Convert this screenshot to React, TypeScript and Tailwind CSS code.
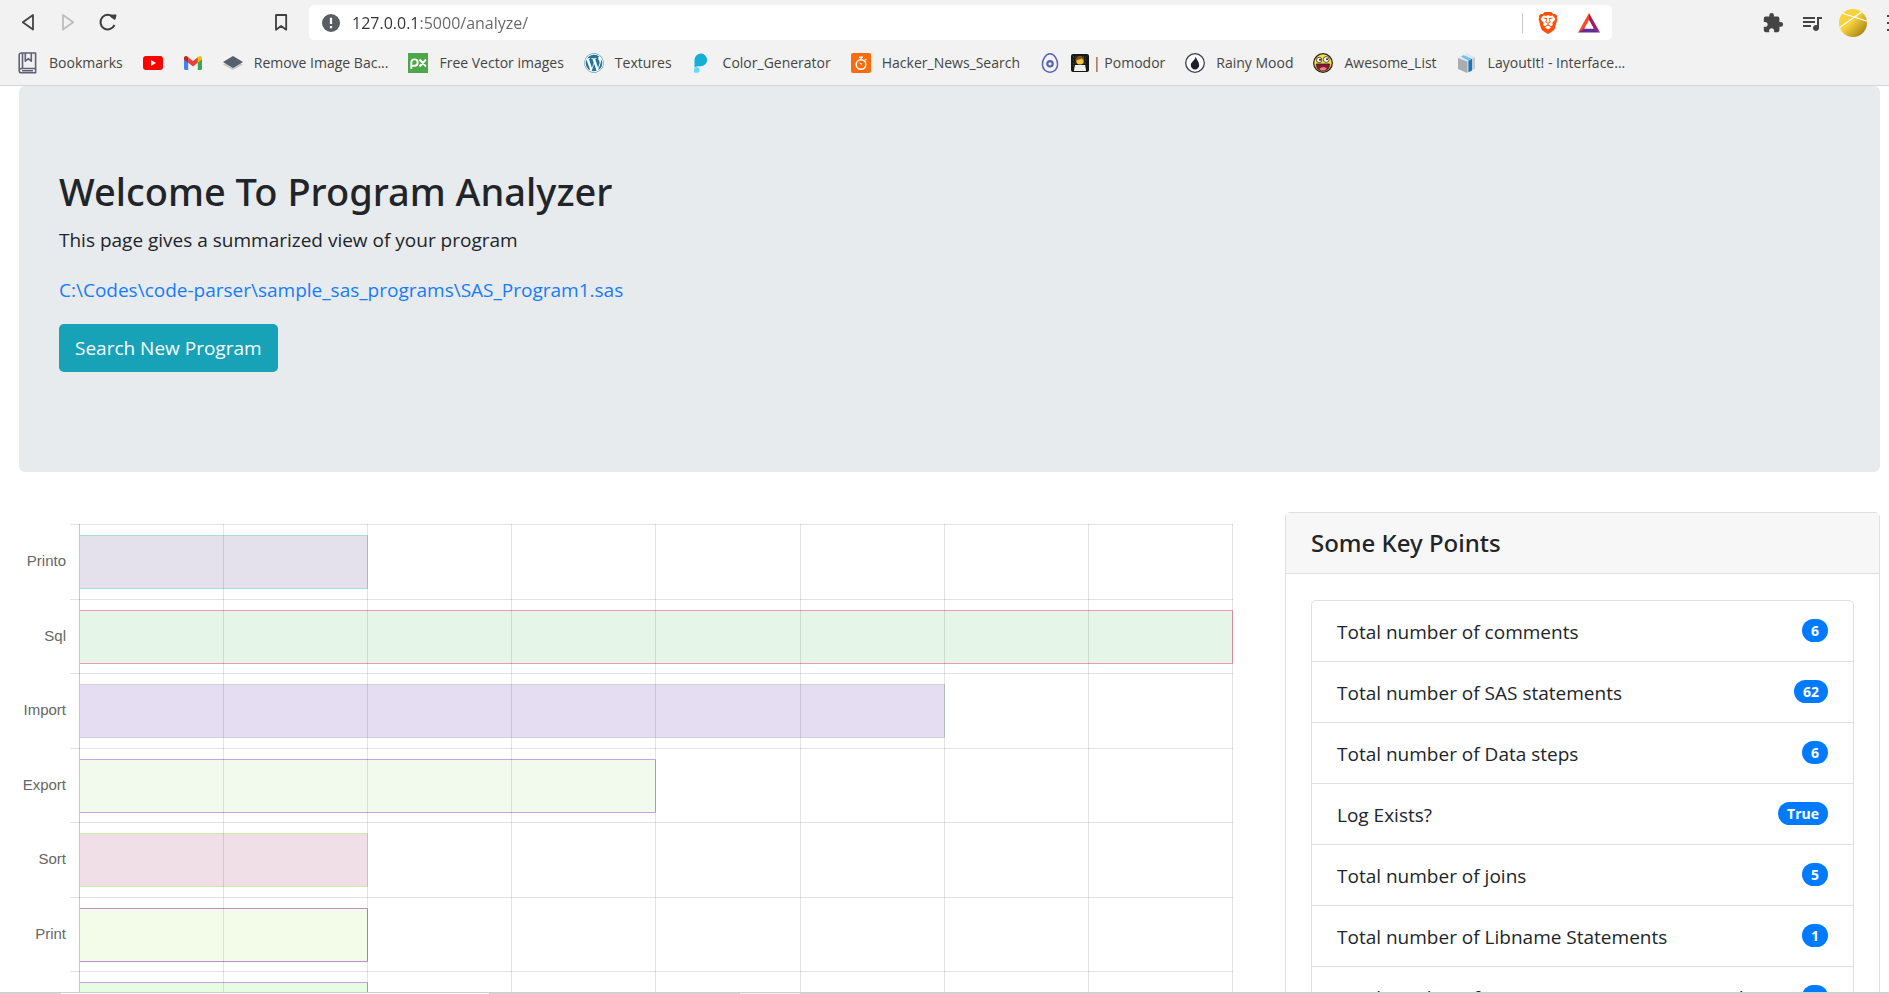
import type { ReactNode } from "react";
import { FaWordpress } from "react-icons/fa";
import { MdExtension, MdQueueMusic } from "react-icons/md";
import { SiBrave } from "react-icons/si";

const bookIcon = (
  <svg viewBox="0 0 20 22" className="h-[22px] w-5" fill="none" stroke="#5f6178" strokeWidth="1.6" strokeLinejoin="round">
    <path d="M1.2 18.5V3a2 2 0 0 1 2-2h14.4v15.5H3.4a2.1 2.1 0 0 0 0 4.3h14.8" />
    <path d="M17.6 16.5v4.3M4.5 1v15M7.3 1v8.2l3-2.6 3 2.6V1M4 18.7h11" />
  </svg>
);

const youtubeIcon = (
  <svg viewBox="0 0 20 20" className="size-5">
    <rect y="3" width="20" height="14" rx="3" fill="#f00" />
    <path d="M8 7v6l5-3z" fill="#fff" />
  </svg>
);

const gmailIcon = (
  <svg viewBox="0 0 20 20" className="size-5">
    <path d="M1 5.2V15.6a1.3 1.3 0 0 0 1.3 1.4H5.2V8.5z" fill="#4285f4" />
    <path d="M14.8 17h2.9a1.3 1.3 0 0 0 1.3-1.4V5.2L14.8 8.5z" fill="#34a853" />
    <path d="M14.8 4.3V9.8L19 6.6V5c0-1.8-2-2.5-3.2-1.5z" fill="#fbbc04" />
    <path d="M5.2 9.8V4.3L10 8l4.8-3.7v5.5L10 13.5z" fill="#ea4335" />
    <path d="M1 5v1.6l4.2 3.2V4.3l-1-.8C3 2.5 1 3.2 1 5z" fill="#c5221f" />
  </svg>
);

const stackIcon = (
  <svg viewBox="0 0 20 20" className="size-5">
    <path d="M0 11.5l10 5.5 10-5.5-3-1.500H3z" fill="#c3c8cc" />
    <path d="M0 9l10-6 10 6-10 6z" fill="#54616c" />
  </svg>
);

const pxIcon = (
  <svg viewBox="0 0 20 20" className="size-5" fill="none" stroke="#fff" strokeWidth="1.9">
    <path d="M0 0h20v20H0z" fill="#4ba747" stroke="none" />
    <path d="M3.3 16V9.5a3.2 3.2 0 1 1 3.2 3.3H4M11.500 6.5l6.500 7M18 6.5l-6.500 7" />
  </svg>
);

const wordpressIcon = (
  <span className="flex size-5 items-center justify-center rounded-full bg-white">
    <FaWordpress className="size-5 text-[#21759b]" />
  </span>
);

const colorIcon = (
  <svg viewBox="0 0 20 20" className="size-5">
    <path d="M2.500 14.500V6.500A6.300 6.300 0 1 1 8.500 13.200C5.500 13.200 4 13.500 2.500 14.500z" fill="#14aed6" />
    <path d="M2 19.500v-2.300a2.800 2.800 0 1 1 2.800 2.600C3.500 19.800 2.800 19.300 2 19.500z" fill="#63dcfa" />
  </svg>
);

const hackerIcon = (
  <svg viewBox="0 0 20 20" className="size-5" fill="none" stroke="#fff" strokeWidth="1.5">
    <rect width="20" height="20" rx="2" fill="#ff6a0a" stroke="none" />
    <circle cx="10" cy="11.5" r="4.8" />
    <path d="M8 4.200h4M10 4.200v2.500M14 6l1.300 1.300" />
    <path d="M8 9.500l2.800 1v2z" fill="#fff" stroke="none" />
  </svg>
);

const eggIcon = (
  <svg viewBox="0 0 20 20" className="size-5" fill="none" stroke="#5563b4">
    <path d="M10 .8C14.5 .8 17.6 7 17.6 11.500a7.600 7.700 0 0 1-15.200 0C2.400 7 5.500 .8 10 .8z" strokeWidth="1.5" />
    <circle cx="10" cy="10.8" r="2.700" strokeWidth="2.200" />
  </svg>
);

const coderIcon = (
  <svg viewBox="0 0 18 18" className="size-[18px]">
    <rect width="18" height="18" rx="2" fill="#151a17" />
    <path d="M2 3h14M2 6h14M2 9h14M2 12h14" stroke="#2c7a45" strokeDasharray="1 1" />
    <path d="M3 17c0-4 2-6 6-6s6 2 6 6z" fill="#f5c63c" />
    <circle cx="9" cy="6.8" r="3.8" fill="#fbc63a" />
    <path d="M5 7c-.5-3 1.500-5 4-5s4.500 2 4 5c-1-.5-1.500-1.500-2-2.500-1.500 1-4.500 1-6 2.500z" fill="#8a4b1f" />
    <path d="M4 11h10l1 6H3z" fill="#eef1f4" />
  </svg>
);

const rainIcon = (
  <svg viewBox="0 0 20 20" className="size-5">
    <circle cx="10" cy="10" r="9.300" fill="#fff" stroke="#3c3c55" strokeWidth="1.300" />
    <path d="M10.800 3.500c.3 3 3.400 5 3.400 8.700a4.200 4.200 0 0 1-8.400 0c0-3.200 4-4.500 5-8.700z" fill="#20202b" />
  </svg>
);

const awesomeIcon = (
  <svg viewBox="0 0 20 20" className="size-5">
    <circle cx="10" cy="10" r="9.300" fill="#f7e14a" stroke="#2b2817" strokeWidth="1.300" />
    <circle cx="6.200" cy="7" r="2.700" fill="#fff" stroke="#2b2817" strokeWidth=".8" />
    <circle cx="13.300" cy="6.500" r="2.900" fill="#fff" stroke="#2b2817" strokeWidth=".8" />
    <circle cx="7" cy="6.700" r="1" fill="#222" />
    <circle cx="14" cy="6.200" r="1" fill="#222" />
    <path d="M3.300 11h13.400c0 4-2.700 7-6.700 7s-6.700-3-6.700-7z" fill="#8b1533" stroke="#2b2817" strokeWidth=".9" />
    <path d="M6.500 16c1-2 5.500-2.500 7.200-.3-1.800 2.300-5.400 2.600-7.200.3z" fill="#ee7f9b" />
  </svg>
);

const layoutIcon = (
  <svg viewBox="0 0 20 20" className="size-5">
    <path d="M1 5l9-4.500 8 3.500-8 4.500z" fill="#e3e6e8" />
    <path d="M1 5l9 3.500V20l-9-4z" fill="#a9adb1" />
    <path d="M10 8.500L18 4v11.500L10 20z" fill="#c9ccd0" />
    <path d="M11.500 7.700l3.500-2v11.800l-3.500 1.800z" fill="#1a73c9" />
    <path d="M4 3.500L6.500 2.300l8.500 3.400-3.500 2z" fill="#6cc3f2" />
  </svg>
);

type Bookmark = { name: string; text?: string; icon: ReactNode; extra?: ReactNode };

const bookmarks: Bookmark[] = [
  { name: "Bookmarks", text: "Bookmarks", icon: bookIcon },
  { name: "YouTube", icon: youtubeIcon },
  { name: "Gmail", icon: gmailIcon },
  { name: "Remove Image Background", text: "Remove Image Bac...", icon: stackIcon },
  { name: "Free Vector images", text: "Free Vector images", icon: pxIcon },
  { name: "Textures", text: "Textures", icon: wordpressIcon },
  { name: "Color_Generator", text: "Color_Generator", icon: colorIcon },
  { name: "Hacker_News_Search", text: "Hacker_News_Search", icon: hackerIcon },
  { name: "Pomodor", text: "| Pomodor", icon: eggIcon, extra: coderIcon },
  { name: "Rainy Mood", text: "Rainy Mood", icon: rainIcon },
  { name: "Awesome_List", text: "Awesome_List", icon: awesomeIcon },
  { name: "LayoutIt!", text: "LayoutIt! - Interface...", icon: layoutIcon },
];

function NavRow() {
  return (
    <div className="flex h-[35px] items-center">
      <div className="flex w-[309px] shrink-0 items-center pl-[18px]">
        <button type="button" aria-label="Back" className="flex size-5 items-center justify-center">
          <svg viewBox="0 0 20 20" className="size-5" fill="none" stroke="#444" strokeWidth="1.8" strokeLinejoin="round">
            <path d="M15 2v14.500L4.800 9.200z" />
          </svg>
        </button>
        <button type="button" aria-label="Forward" className="ml-5 flex size-5 items-center justify-center">
          <svg viewBox="0 0 20 20" className="size-5" fill="none" stroke="#bdbdbd" strokeWidth="1.8" strokeLinejoin="round">
            <path d="M5 2v14.500l10.200-7.300z" />
          </svg>
        </button>
        <button type="button" aria-label="Reload" className="ml-5 flex size-5 items-center justify-center">
          <svg viewBox="0 0 20 20" className="size-5" fill="none" stroke="#3f3f3f" strokeWidth="2">
            <path d="M16.500 12A7.300 7.300 0 1 1 15.300 4.300" />
            <path d="M13 1.700a14 14 0 0 1 4.500-.2c.8 0 1 .5.9 1.200l-.8 3.300c-.2.9-1 1-1.700.5l-3.300-2.500c-.8-.7-.6-2 .4-2.300z" fill="#3f3f3f" stroke="none" />
          </svg>
        </button>
        <button type="button" aria-label="Bookmark this page" className="mr-5 ml-auto flex h-5 w-4 items-center justify-center">
          <svg viewBox="0 0 16 20" className="h-5 w-4" fill="none" stroke="#3f3f3f" strokeWidth="1.800">
            <path d="M3 2h10.200v14.700L8.100 13 3 16.700z" strokeLinejoin="round" />
          </svg>
        </button>
      </div>
      <div className="flex h-[35px] flex-1 items-center rounded-[5px] bg-white pr-[11px] pl-[13px]">
        <svg viewBox="0 0 18 18" className="size-[18px]" aria-hidden="true">
          <circle cx="9" cy="9" r="9" fill="#5a5e63" />
          <path d="M9 3.800v6.200M9 12v2.300" stroke="#fff" strokeWidth="2.200" />
        </svg>
        <input
          aria-label="Address"
          type="text"
          defaultValue="127.0.0.1:5000/analyze/"
          className="ml-3 min-w-0 flex-1 bg-[linear-gradient(90deg,#333_68px,#666_68px)] bg-clip-text text-[16px] leading-6 text-transparent outline-none"
        />
        <span className="h-5 w-px bg-[#c9c9c9]" />
        <button type="button" aria-label="Shields" className="ml-[14px]">
          <SiBrave className="h-6 w-[22px] text-[#fb4f0a]" />
        </button>
        <button type="button" aria-label="Rewards" className="ml-[18px]">
          <svg viewBox="0 0 24 22" className="h-[22px] w-6">
            <path d="M12 1L1 20.500l6-3.200L12 8z" fill="#ff4724" />
            <path d="M12 1l11 19.500-6-3.200L12 8z" fill="#9e1f63" />
            <path d="M1 20.500h22l-6-4H7z" fill="#662d91" />
            <path d="M12 8.500l4.500 8h-9z" fill="#fff" />
          </svg>
        </button>
      </div>
      <div className="flex w-[277px] shrink-0 items-center overflow-hidden pl-[150px] text-[#444]">
        <button type="button" aria-label="Extensions"><MdExtension className="size-[22px]" /></button>
        <button type="button" aria-label="Media" className="ml-4"><MdQueueMusic className="size-6" /></button>
        <button type="button" aria-label="Profile" className="ml-[15px] shrink-0">
          <svg viewBox="0 0 28 28" className="size-7">
            <defs>
              <linearGradient id="gold" x1="0" y1="0" x2="1" y2="1">
                <stop offset=".45" stopColor="#f8d13c" />
                <stop offset="1" stopColor="#8d700c" />
              </linearGradient>
              <clipPath id="disc"><circle cx="14" cy="14" r="14" /></clipPath>
            </defs>
            <circle cx="14" cy="14" r="14" fill="url(#gold)" />
            <path d="M0 19L24 2M4 4.500l25 8" stroke="#fff" strokeWidth="1.300" clipPath="url(#disc)" />
          </svg>
        </button>
        <button type="button" aria-label="Menu" className="ml-5 shrink-0">
          <svg viewBox="0 0 20 20" className="size-5" stroke="#444" strokeWidth="2">
            <path d="M0 3h20M0 10h20M0 17h20" />
          </svg>
        </button>
      </div>
    </div>
  );
}

function BrowserBar() {
  return (
    <header className="h-[86px] shrink-0 overflow-hidden border-b border-[#d3d7da] bg-[#f2f2f2] pt-[5px]">
      <NavRow />
      <nav className="flex h-[45px] items-center gap-5 pl-[18px] text-[14px] whitespace-nowrap text-[#454545]">
        {bookmarks.map((b) => (
          <a key={b.name} href="#" aria-label={b.name} className="flex shrink-0 items-center gap-[11px]">
            {b.icon}
            {b.text && (
              <span className="flex items-center gap-1">
                {b.extra}
                {b.text}
              </span>
            )}
          </a>
        ))}
      </nav>
    </header>
  );
}

type Bar = { label?: string; value: number; fill: string; stroke: string };

const bars: Bar[] = [
  { label: "Printo", value: 2, fill: "#e4e1ed", stroke: "#a9dcd4" },
  { label: "Sql", value: 8, fill: "#e5f5e7", stroke: "#f09ab0" },
  { label: "Import", value: 6, fill: "#e5ddf2", stroke: "#cdd2d2" },
  { label: "Export", value: 4, fill: "#f2faee", stroke: "#c6a5e6" },
  { label: "Sort", value: 2, fill: "#f1dfe8", stroke: "#c9eda0" },
  { label: "Print", value: 2, fill: "#f3fce8", stroke: "#be8fd0" },
  { value: 2, fill: "#e7fde2", stroke: "#c7a0e6" },
];

const left = 61;
const step = 144.1;
const band = 74.5;

function ProcChart() {
  const bottom = 12 + band * bars.length;
  return (
    <svg viewBox="0 0 1228 560" className="col-span-2 w-full" role="img" aria-label="Procedures used">
      {bars.map((b, i) => {
        const top = Math.round(23 + i * band);
        const right = Math.round(left + b.value * step);
        return (
          <g key={i}>
            <rect x={left} y={top} width={right - left} height="54" fill={b.fill} />
            <path d={`M${left} ${top + 0.5}H${right - 0.5}V${top + 53.5}H${left}`} fill="none" stroke={b.stroke} />
            {b.label && (
              <text x="47" y={top + 31} textAnchor="end" fontSize="15" fill="#666" className="font-['Liberation_Sans',Arial,sans-serif]">
                {b.label}
              </text>
            )}
          </g>
        );
      })}
      {Array.from({ length: 9 }, (_, i) => {
        const x = Math.round(left + i * step) - 0.5;
        return <path key={i} d={`M${x} 12V${bottom}`} stroke="#000" strokeOpacity={i === 0 ? 0.22 : 0.11} />;
      })}
      {Array.from({ length: bars.length + 1 }, (_, i) => {
        const y = Math.round(12 + i * band) + 0.5;
        return <path key={i} d={`M51 ${y}H1214`} stroke="#000" strokeOpacity=".11" />;
      })}
    </svg>
  );
}

const points: [string, string][] = [
  ["Total number of comments", "6"],
  ["Total number of SAS statements", "62"],
  ["Total number of Data steps", "6"],
  ["Log Exists?", "True"],
  ["Total number of joins", "5"],
  ["Total number of Libname Statements", "1"],
  ["Total number of Proc Import Statements used", "6"],
];

function KeyPoints() {
  return (
    <section className="rounded-[5px] border border-[#dfdfdf] bg-white">
      <h5 className="border-b border-[#dfdfdf] bg-[#f7f7f7] px-[25px] py-[15px] font-['Noto_Sans',sans-serif] text-[24px] leading-[30px] font-medium">
        Some Key Points
      </h5>
      <div className="px-[25px] py-[26px]">
        <ul className="rounded-[5px] border border-[#dfdfdf]">
          {points.map(([label, value]) => (
            <li key={label} className="flex items-start justify-between border-b border-[#dfdfdf] px-[25px] pt-4 pb-[14px] last:border-b-0">
              <span className="text-[19px] leading-[30px]">{label}</span>
              <span className="mt-[2px] rounded-full bg-[#007bff] px-[9px] text-[14px] leading-[23px] font-bold text-white">{value}</span>
            </li>
          ))}
        </ul>
      </div>
    </section>
  );
}

export default function App() {
  return (
    <div className="flex h-screen flex-col overflow-hidden bg-white font-['Open_Sans','Noto_Sans',sans-serif] text-[#212529]">
      <BrowserBar />
      <main className="min-h-0 flex-1 overflow-hidden pr-[9px] pl-[19px]">
        <section className="rounded-[6px] bg-[#e8ebee] px-10 pt-[81px] pb-[100px]">
          <h1 className="mb-[10px] font-['Noto_Sans',sans-serif] text-[38px] leading-[48px] font-medium">
            Welcome To Program Analyzer
          </h1>
          <p className="mb-5 text-[19px] leading-[30px]">This page gives a summarized view of your program</p>
          <p className="mb-[19px] text-[19px] leading-[30px]">
            <a href="#" className="text-[#167bff]">C:\Codes\code-parser\sample_sas_programs\SAS_Program1.sas</a>
          </p>
          <button type="button" className="block h-12 rounded-[5px] bg-[#17a2b8] px-4 text-[19px] leading-[30px] text-white">
            Search New Program
          </button>
        </section>
        <div className="mt-10 grid grid-cols-3 items-start gap-[38px]">
          <ProcChart />
          <KeyPoints />
        </div>
      </main>
      <div className="flex h-[2px] shrink-0 border-t border-[#cdcdcd] bg-[#d3d3d3]">
        <span className="ml-[61px] w-[428px] bg-white" />
        <span className="ml-[251px] w-[60px] bg-[#f0f0f0]" />
      </div>
    </div>
  );
}
